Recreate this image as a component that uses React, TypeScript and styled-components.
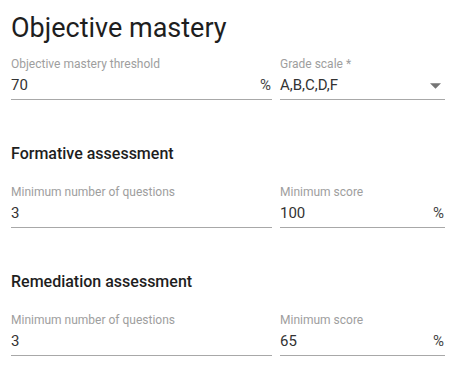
import React from "react";
import styled, { createGlobalStyle } from "styled-components";

const GlobalStyle = createGlobalStyle`
  html, body { margin: 0; padding: 0; background: #ffffff; }
  body { font-family: Roboto, "Liberation Sans", Arial, sans-serif; }
`;

const Page = styled.div`
  padding: 12px 14px 0 11px;
  width: 434px;
`;

const Title = styled.h1`
  margin: 0 0 12px 0;
  font-size: 27px;
  line-height: 33px;
  font-weight: 400;
  color: #1e1e1e;
`;

const Section = styled.section`
  margin-top: 44px;
`;

const Heading = styled.h2`
  margin: 0 0 22px 0;
  font-size: 16px;
  line-height: 19px;
  font-weight: 500;
  color: #1e1e1e;
`;

const Row = styled.div`
  display: grid;
  grid-template-columns: 261px 165px;
  column-gap: 8px;
`;

const Field = styled.div`
  display: flex;
  flex-direction: column;
`;

const Label = styled.label`
  font-size: 12px;
  line-height: 14px;
  color: #9e9e9e;
  white-space: nowrap;
`;

const InputRow = styled.div`
  display: flex;
  align-items: center;
  padding-top: 1px;
  height: 27px;
  border-bottom: 1px solid #a8a8a8;
`;

const Value = styled.span`
  flex: 1;
  font-size: 15px;
  line-height: 27px;
  color: #333333;
`;

const Suffix = styled.span`
  font-size: 15px;
  line-height: 27px;
  color: #444444;
  padding-right: 1px;
`;

const Arrow = styled.svg`
  width: 11px;
  height: 6px;
  margin-right: 4px;
  margin-top: 1px;
`;

type TextFieldProps = {
  label: string;
  value: string;
  suffix?: string;
  select?: boolean;
};

function TextField({ label, value, suffix, select }: TextFieldProps) {
  return (
    <Field>
      <Label>{label}</Label>
      <InputRow>
        <Value>{value}</Value>
        {suffix && <Suffix>{suffix}</Suffix>}
        {select && (
          <Arrow viewBox="0 0 10 5">
            <path d="M0 0 L10 0 L5 5 Z" fill="#757575" />
          </Arrow>
        )}
      </InputRow>
    </Field>
  );
}

export default function App() {
  return (
    <>
      <GlobalStyle />
      <Page>
        <Title>Objective mastery</Title>
        <Row>
          <TextField label="Objective mastery threshold" value="70" suffix="%" />
          <TextField label="Grade scale *" value="A,B,C,D,F" select />
        </Row>
        <Section>
          <Heading>Formative assessment</Heading>
          <Row>
            <TextField label="Minimum number of questions" value="3" />
            <TextField label="Minimum score" value="100" suffix="%" />
          </Row>
        </Section>
        <Section>
          <Heading>Remediation assessment</Heading>
          <Row>
            <TextField label="Minimum number of questions" value="3" />
            <TextField label="Minimum score" value="65" suffix="%" />
          </Row>
        </Section>
      </Page>
    </>
  );
}
